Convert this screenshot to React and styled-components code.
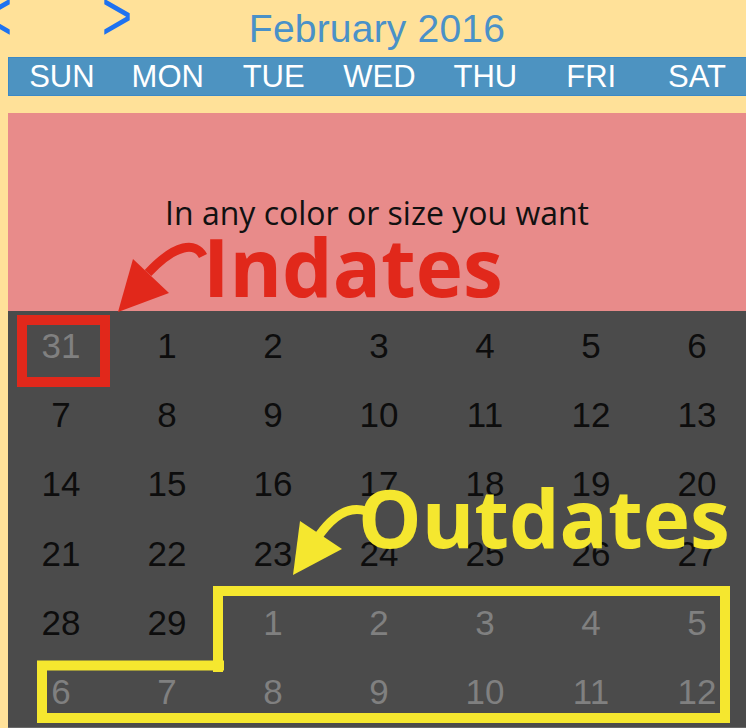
import React from "react";
import styled, { createGlobalStyle } from "styled-components";

const GlobalStyle = createGlobalStyle`
  html, body {
    margin: 0;
    padding: 0;
    background: #ffe199;
  }
  body {
    font-family: "Liberation Sans", Arial, sans-serif;
    overflow: hidden;
  }
`;

const Page = styled.div`
  position: relative;
  width: 746px;
  height: 728px;
  padding-left: 8px;
  box-sizing: border-box;
  background: #ffe199;
  overflow: hidden;
`;

const Header = styled.div`
  display: grid;
  grid-template-columns: 1fr auto 1fr;
  align-items: center;
  height: 57px;
`;

const NavGroup = styled.div`
  display: flex;
  align-self: start;
  margin-left: -71px;
`;

const NavButton = styled.button`
  width: 120px;
  height: 36px;
  padding: 0;
  border: none;
  background: none;
  color: #1e72f0;
  font-family: "Liberation Sans", Arial, sans-serif;
  font-size: 58px;
  line-height: 36px;
  text-align: center;
  overflow: visible;
  margin-top: -2px;
  transform: scale(0.9, 1.2);
`;

const Title = styled.div`
  font-size: 39px;
  line-height: 1;
  color: #4a91c8;
  letter-spacing: 0.2px;
`;

const WeekBar = styled.div`
  display: grid;
  grid-template-columns: repeat(7, 1fr);
  width: 742px;
  height: 39px;
  box-sizing: border-box;
  background: #4d93c1;
  border: 1px solid #3c89c6;
  border-right: none;
`;

const WeekDay = styled.div`
  display: flex;
  align-items: center;
  justify-content: center;
  color: #fff;
  font-size: 31px;
`;

const HeaderView = styled.div`
  margin-top: 17px;
  height: 198px;
  background: #e88b8a;
  display: flex;
  align-items: center;
  justify-content: center;
  font-family: "Open Sans", sans-serif;
  font-size: 32px;
  color: #111;
`;

const DayGrid = styled.div`
  display: grid;
  grid-template-columns: repeat(7, 1fr);
  grid-auto-rows: 69.33px;
  width: 742px;
  background: #4b4b4b;
  border-bottom: 2px solid #6a6a6a;
`;

const DayCell = styled.div`
  display: flex;
  align-items: center;
  justify-content: center;
  font-size: 35px;
  color: ${(p) => (p.$outside ? "#808080" : "#0d0d0d")};
`;

const Overlay = styled.svg`
  position: absolute;
  left: 0;
  top: 0;
  pointer-events: none;
`;

const Callout = styled.div`
  position: absolute;
  left: ${(p) => p.$x}px;
  top: ${(p) => p.$y}px;
  font-family: "Open Sans", sans-serif;
  font-weight: 700;
  font-size: 80px;
  line-height: 1;
  color: ${(p) => p.$color};
  white-space: nowrap;
`;

const WEEKDAYS = ["SUN", "MON", "TUE", "WED", "THU", "FRI", "SAT"];

const buildDays = () => {
  const days = [{ n: 31, out: true }];
  for (let i = 1; i <= 29; i++) days.push({ n: i, out: false });
  for (let i = 1; i <= 12; i++) days.push({ n: i, out: true });
  return days;
};

const RED = "#e1281b";
const YELLOW = "#f5e72f";

export default function App() {
  const days = buildDays();
  return (
    <>
      <GlobalStyle />
      <Page>
        <Header>
          <NavGroup>
            <NavButton>{"<"}</NavButton>
            <NavButton>{">"}</NavButton>
          </NavGroup>
          <Title>February 2016</Title>
          <div />
        </Header>
        <WeekBar>
          {WEEKDAYS.map((d) => (
            <WeekDay key={d}>{d}</WeekDay>
          ))}
        </WeekBar>
        <HeaderView>In any color or size you want</HeaderView>
        <DayGrid>
          {days.map((d, i) => (
            <DayCell key={i} $outside={d.out}>
              {d.n}
            </DayCell>
          ))}
        </DayGrid>

        <Overlay width="746" height="728" viewBox="0 0 746 728">
          <rect x="22" y="320" width="83" height="62" fill="none" stroke={RED} strokeWidth="10" />
          <path d="M203 256 C196 242 176 243 148 273" fill="none" stroke={RED} strokeWidth="9" />
          <polygon points="118,312 133,259 169,293" fill={RED} />

          <path d="M218 672 V591 H725 V718 H213" fill="none" stroke={YELLOW} strokeWidth="10" />
          <path d="M224 665.5 H42 V718 H224" fill="none" stroke={YELLOW} strokeWidth="10" />
          <path d="M366 511 C350 506 333 514 316 540" fill="none" stroke={YELLOW} strokeWidth="9" />
          <polygon points="293,575 300,521 342,549" fill={YELLOW} />
        </Overlay>
        <Callout $x={203} $y={226} $color={RED}>
          Indates
        </Callout>
        <Callout $x={358} $y={477} $color={YELLOW}>
          Outdates
        </Callout>
      </Page>
    </>
  );
}
